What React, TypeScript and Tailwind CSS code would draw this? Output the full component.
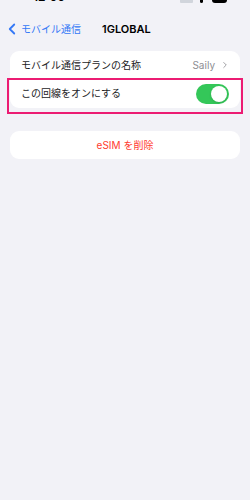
import { ChevronLeft, ChevronRight } from 'lucide-react'

const font = { fontFamily: 'Inter, "Noto Sans CJK JP", sans-serif' }

function StatusBar() {
  return (
    <div className="h-[3px] overflow-hidden flex items-end justify-between pl-[33px] pr-[23px]">
      <span className="text-[12px] leading-[12px] font-semibold text-black">12:00</span>
      <div className="flex items-end">
        <div className="w-[13px] h-[8px] bg-gray-300 rounded-[1px]" />
        <div className="ml-[7px] w-[3px] h-[6px] bg-black rounded-full" />
        <div className="ml-[9px] w-[15px] h-[9px] bg-black rounded-[3px]" />
      </div>
    </div>
  )
}

function Toggle() {
  return (
    <div className="w-[33px] h-[20px] rounded-full bg-[#34c759] p-[2px] flex justify-end">
      <div className="w-[16px] h-[16px] rounded-full bg-white shadow" />
    </div>
  )
}

export default function App() {
  return (
    <div className="w-[250px] h-[500px] bg-[#f2f2f7] overflow-hidden" style={font}>
      <StatusBar />
      <div className="h-[48px] pt-[4px] flex items-center">
        <div className="flex items-center text-[#3478f6] pl-[3px]">
          <ChevronLeft className="w-[18px] h-[18px]" strokeWidth={2.4} />
          <span className="text-[10px]">モバイル通信</span>
        </div>
        <span className="ml-[21px] text-[11px] font-semibold text-black">1GLOBAL</span>
      </div>

      <div className="mx-[10px] bg-white rounded-[9px]">
        <div className="h-[28px] flex items-center justify-between pl-[11px] pr-[10px]">
          <span className="text-[10px] text-[#1c1c1e]">モバイル通信プランの名称</span>
          <div className="flex items-center gap-[5px] text-[#8e8e93]">
            <span className="text-[10px]">Saily</span>
            <ChevronRight className="w-[10px] h-[10px]" strokeWidth={2} />
          </div>
        </div>
        <div className="relative h-[29px] flex items-center justify-between pl-[11px] pr-[11px]">
          <span className="text-[10px] text-[#1c1c1e]">この回線をオンにする</span>
          <Toggle />
          <div className="absolute left-[-3px] right-[-3px] top-[-1px] bottom-[-6px] border-2 border-[#ec1c73] pointer-events-none" />
        </div>
      </div>

      <div className="mx-[10px] mt-[23px] h-[28px] bg-white rounded-[9px] flex items-center justify-center">
        <span className="text-[10px] text-[#ff3b30]">eSIM を削除</span>
      </div>
    </div>
  )
}
